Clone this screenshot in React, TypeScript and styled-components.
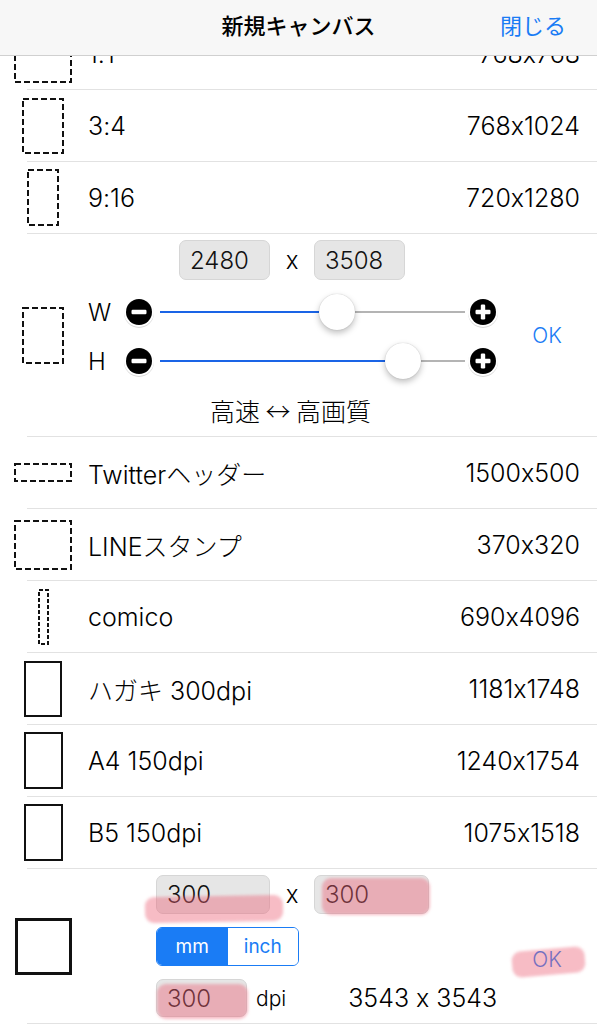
import React, { useLayoutEffect, useRef } from 'react'
import styled, { createGlobalStyle } from 'styled-components'

const BLUE = '#1a7cf5'
const LINE = '#e2e2e2'

const GlobalStyle = createGlobalStyle`
  html, body {
    margin: 0;
    padding: 0;
    background: #fff;
  }
  body {
    font-family: Inter, "Noto Sans CJK JP", sans-serif;
    font-weight: 300;
    font-feature-settings: "calt" 0;
    color: #000;
  }
  * {
    box-sizing: border-box;
  }
`

const Screen = styled.div`
  width: 597px;
  height: 1024px;
  display: flex;
  flex-direction: column;
  overflow: hidden;
  background: #fff;
`

const NavBar = styled.header`
  flex: none;
  height: 56px;
  padding-bottom: 8px;
  display: grid;
  grid-template-columns: 1fr auto 1fr;
  align-items: center;
  background: #f7f7f7;
  border-bottom: 1px solid #d0d0d0;
`

const NavTitle = styled.h1`
  grid-column: 2;
  margin: 0;
  font-family: "Noto Sans CJK JP", sans-serif;
  font-size: 22px;
  font-weight: 500;
`

const NavButton = styled.button`
  justify-self: end;
  margin-right: 31px;
  padding: 0;
  border: 0;
  background: none;
  color: ${BLUE};
  font-family: "Noto Sans CJK JP", sans-serif;
  font-size: 22px;
  font-weight: 400;
`

const Scroller = styled.div`
  flex: 1;
  overflow: hidden;
`

const separator = `
  background: linear-gradient(${LINE}, ${LINE}) no-repeat right bottom / calc(100% - 27px) 1px;
  padding-bottom: 1px;
`

const Row = styled.div`
  display: grid;
  grid-template-columns: 86px 1fr auto;
  align-items: center;
  height: 72px;
  padding-right: 17px;
  font-size: 25px;
  ${separator}
`

const IconCell = styled.div`
  display: flex;
  justify-content: center;
  align-items: center;
`

const Label = styled.span`
  padding-left: 2px;
`

const Size = styled.span`
  text-align: right;
`

const Editor = styled.div`
  position: relative;
  display: grid;
  grid-template-columns: 86px 1fr 92px;
  align-items: center;
  font-size: 24px;
  ${separator}
`

const EditorBody = styled.div`
  display: flex;
  flex-direction: column;
  padding: 6px 0 11px;
`

const InputRow = styled.div<{ $center?: boolean }>`
  display: flex;
  align-items: center;
  justify-content: ${(p) => (p.$center ? 'center' : 'flex-start')};
  padding-right: ${(p) => (p.$center ? '7px' : '0')};
`

const Field = styled.input<{ $w: number; $h?: number }>`
  width: ${(p) => p.$w}px;
  height: ${(p) => p.$h ?? 40}px;
  padding: 0 0 0 10px;
  border: 1px solid #d6d6d6;
  border-radius: 7px;
  background: #e6e6e6;
  color: #111;
  font-family: inherit;
  font-weight: inherit;
  font-feature-settings: inherit;
  font-size: 24px;
  outline: none;
`

const Times = styled.span`
  width: 44px;
  text-align: center;
  font-size: 24px;
`

const SliderRow = styled.div<{ $top: number }>`
  display: flex;
  align-items: center;
  height: 40px;
  margin-top: ${(p) => p.$top}px;
  padding: 0 6px 0 2px;
`

const AxisLabel = styled.span`
  width: 35px;
  font-size: 24px;
`

const Track = styled.div<{ $value: number }>`
  position: relative;
  flex: 1;
  height: 36px;
  margin: 0 2px 0 5px;
  background: linear-gradient(
      to right,
      #1a64e6 ${(p) => p.$value}%,
      #b4b4b4 ${(p) => p.$value}%
    )
    no-repeat center / 100% 2px;
`

const Thumb = styled.span<{ $value: number }>`
  position: absolute;
  top: 50%;
  left: ${(p) => p.$value}%;
  width: 36px;
  height: 36px;
  border-radius: 50%;
  background: #fff;
  transform: translate(-50%, -50%);
  box-shadow: 0 3px 6px rgba(0, 0, 0, 0.25), 0 0 1px rgba(0, 0, 0, 0.25);
`

const Caption = styled.div`
  margin-top: 14px;
  padding-right: 10px;
  line-height: 30px;
  text-align: center;
  font-family: "Noto Sans CJK JP", sans-serif;
  font-size: 25px;
`

const OkButton = styled.button<{ $shift?: number }>`
  justify-self: center;
  margin: ${(p) => p.$shift ?? 0}px 8px 0 0;
  padding: 0;
  border: 0;
  background: none;
  color: ${BLUE};
  font-family: Inter, sans-serif;
  font-weight: 300;
  font-size: 21px;
`

const Form = styled.div`
  display: flex;
  flex-direction: column;
  gap: 13px;
  padding: 6px 0 6px 70px;
`

const Segmented = styled.div`
  display: flex;
  width: 143px;
  height: 39px;
  border: 1.5px solid ${BLUE};
  border-radius: 6px;
  overflow: hidden;
`

const Segment = styled.span<{ $active?: boolean }>`
  flex: 1;
  display: flex;
  justify-content: center;
  align-items: center;
  background: ${(p) => (p.$active ? BLUE : '#fff')};
  color: ${(p) => (p.$active ? '#fff' : BLUE)};
  font-size: 19px;
  font-weight: 400;
`

const Unit = styled.span`
  margin-left: 9px;
  font-size: 21px;
`

const Result = styled.span`
  margin-left: 62px;
  font-size: 25px;
`

const Marker = styled.span<{ $x: number; $y: number; $w: number; $h: number; $r?: number }>`
  position: absolute;
  left: ${(p) => p.$x}px;
  top: ${(p) => p.$y}px;
  width: ${(p) => p.$w}px;
  height: ${(p) => p.$h}px;
  border-radius: 9px;
  background: rgba(236, 96, 116, 0.42);
  filter: blur(1.5px);
  transform: rotate(${(p) => p.$r ?? 0}deg);
  pointer-events: none;
`

function FrameIcon({ w, h, dashed, stroke = 2 }: { w: number; h: number; dashed?: boolean; stroke?: number }) {
  const dash = w < 16 ? '4 2' : '6 3'
  return (
    <svg width={w} height={h} viewBox={`0 0 ${w} ${h}`}>
      <rect
        x={stroke / 2}
        y={stroke / 2}
        width={w - stroke}
        height={h - stroke}
        fill="none"
        stroke="#111"
        strokeWidth={stroke}
        strokeDasharray={dashed ? dash : undefined}
      />
    </svg>
  )
}

function StepButton({ plus }: { plus?: boolean }) {
  return (
    <svg width="32" height="32" viewBox="0 0 32 32">
      <circle cx="16" cy="17" r="15" fill="rgba(0,0,0,0.15)" />
      <circle cx="16" cy="16" r="15" fill="#fff" />
      <circle cx="16" cy="16" r="13" fill="#000" />
      <rect x="8.5" y="13.8" width="15" height="4.4" rx="1.2" fill="#fff" />
      {plus && <rect x="13.8" y="8.5" width="4.4" height="15" rx="1.2" fill="#fff" />}
    </svg>
  )
}

type Preset = { label: string; size: string; w: number; h: number; dashed?: boolean }

const ratioPresets: Preset[] = [
  { label: '1:1', size: '768x768', w: 58, h: 58, dashed: true },
  { label: '3:4', size: '768x1024', w: 42, h: 56, dashed: true },
  { label: '9:16', size: '720x1280', w: 32, h: 57, dashed: true },
]

const namedPresets: Preset[] = [
  { label: 'Twitterヘッダー', size: '1500x500', w: 58, h: 19, dashed: true },
  { label: 'LINEスタンプ', size: '370x320', w: 58, h: 50, dashed: true },
  { label: 'comico', size: '690x4096', w: 11, h: 56, dashed: true },
  { label: 'ハガキ 300dpi', size: '1181x1748', w: 38, h: 56 },
  { label: 'A4 150dpi', size: '1240x1754', w: 39, h: 57 },
  { label: 'B5 150dpi', size: '1075x1518', w: 39, h: 57 },
]

function PresetRow({ preset }: { preset: Preset }) {
  return (
    <Row>
      <IconCell>
        <FrameIcon w={preset.w} h={preset.h} dashed={preset.dashed} />
      </IconCell>
      <Label>{preset.label}</Label>
      <Size>{preset.size}</Size>
    </Row>
  )
}

function Slider({ axis, value, top }: { axis: string; value: number; top: number }) {
  return (
    <SliderRow $top={top}>
      <AxisLabel>{axis}</AxisLabel>
      <StepButton />
      <Track $value={value}>
        <Thumb $value={value} />
      </Track>
      <StepButton plus />
    </SliderRow>
  )
}

export default function App() {
  const scrollRef = useRef<HTMLDivElement>(null)

  useLayoutEffect(() => {
    if (scrollRef.current) scrollRef.current.scrollTop = 39
  }, [])

  return (
    <Screen>
      <GlobalStyle />
      <NavBar>
        <NavTitle>新規キャンバス</NavTitle>
        <NavButton>閉じる</NavButton>
      </NavBar>
      <Scroller ref={scrollRef}>
        {ratioPresets.map((p) => (
          <PresetRow key={p.label} preset={p} />
        ))}

        <Editor>
          <IconCell>
            <FrameIcon w={42} h={57} dashed />
          </IconCell>
          <EditorBody>
            <InputRow $center>
              <Field $w={91} value="2480" readOnly />
              <Times>x</Times>
              <Field $w={91} value="3508" readOnly />
            </InputRow>
            <Slider axis="W" value={58} top={12} />
            <Slider axis="H" value={79.7} top={9} />
            <Caption>高速 ↔ 高画質</Caption>
          </EditorBody>
          <OkButton>OK</OkButton>
        </Editor>

        {namedPresets.map((p) => (
          <PresetRow key={p.label} preset={p} />
        ))}

        <Editor>
          <IconCell>
            <FrameIcon w={57} h={57} stroke={3} />
          </IconCell>
          <Form>
            <InputRow>
              <Field $w={114} $h={39} value="300" readOnly />
              <Times>x</Times>
              <Field $w={115} $h={39} value="300" readOnly />
            </InputRow>
            <Segmented>
              <Segment $active>mm</Segment>
              <Segment>inch</Segment>
            </Segmented>
            <InputRow>
              <Field $w={91} $h={38} value="300" readOnly />
              <Unit>dpi</Unit>
              <Result>3543 x 3543</Result>
            </InputRow>
          </Form>
          <OkButton $shift={26}>OK</OkButton>
          <Marker $x={145} $y={27} $w={138} $h={26} $r={-1} />
          <Marker $x={322} $y={9} $w={108} $h={37} />
          <Marker $x={157} $y={115} $w={91} $h={35} />
          <Marker $x={512} $y={80} $w={73} $h={26} $r={-5} />
        </Editor>
      </Scroller>
    </Screen>
  )
}
